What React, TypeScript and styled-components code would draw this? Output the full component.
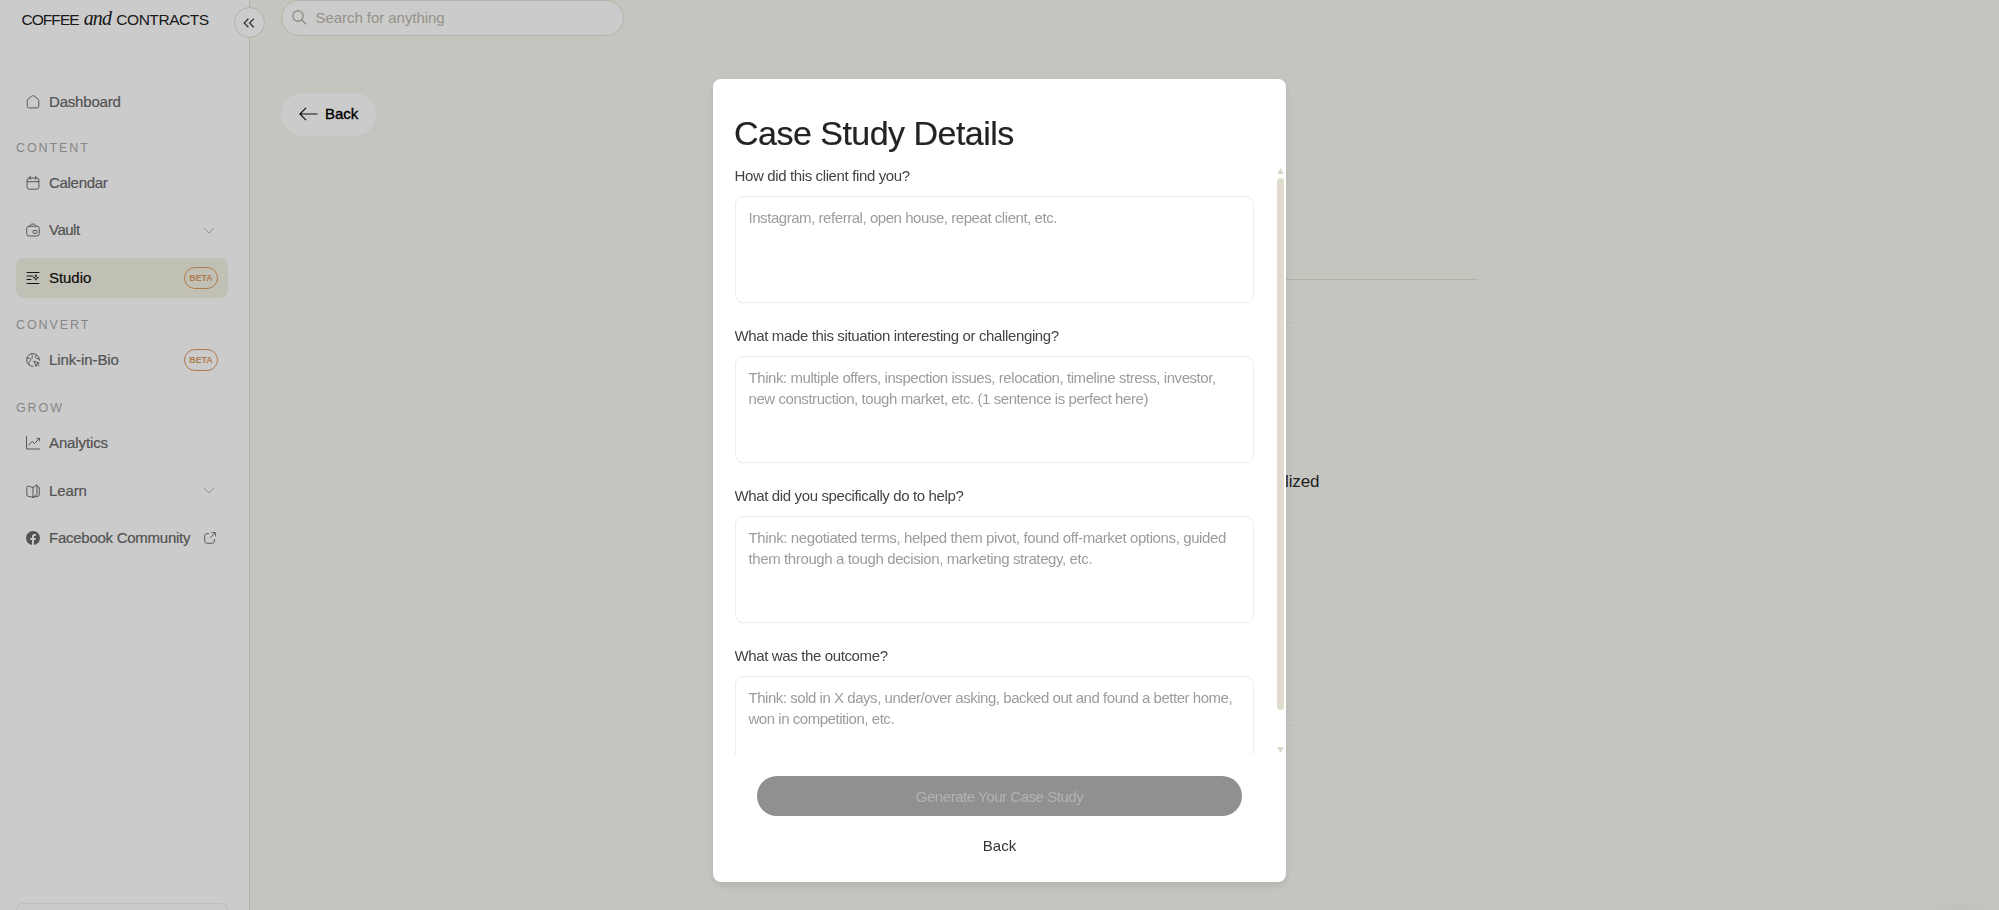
import React from 'react'
import styled, { createGlobalStyle, css } from 'styled-components'

type NavEntry = {
  label: string
  icon: React.ReactNode
  spacing: number
  active?: boolean
  beta?: boolean
  expandable?: boolean
  external?: boolean
}

type NavGroup = {
  title?: string
  offset: number
  items: NavEntry[]
}

const HomeIcon = () => (
  <Glyph viewBox="0 0 14 14">
    <path d="M1.2 5.6c0-.6.3-1.1.7-1.5L5.8 1.1c.7-.5 1.7-.5 2.4 0l3.900 3c.4.4.7.9.7 1.500v5.700c0 .9-.7 1.600-1.600 1.600H2.800c-.9 0-1.600-.7-1.600-1.600z" />
  </Glyph>
)

const CalendarIcon = () => (
  <Glyph viewBox="0 0 14 14">
    <rect x="1.1" y="2" width="11.8" height="11.2" rx="2" />
    <path d="M1.1 5.700h11.800M4.200.4v3M9.800.4v3" />
  </Glyph>
)

const VaultIcon = () => (
  <Glyph viewBox="0 0 14 14">
    <rect x=".7" y="3.2" width="12.6" height="9.8" rx="2.4" />
    <path d="M4.200 3.200c0-1.300.7-2.100 1.800-2.100h2c1.100 0 1.800.8 1.800 2.100" />
    <rect x="7" y="7.5" width="4.2" height="2.8" rx=".8" />
  </Glyph>
)

const StudioIcon = () => (
  <Glyph viewBox="0 0 14 14">
    <path d="M1 1.500h12M1 5h6M1 8.500h4M1 12.500h12" />
    <path d="M9.900 4.200c.3 1.700.8 2.200 2.500 2.500-1.700.3-2.200.8-2.500 2.500-.3-1.700-.8-2.200-2.500-2.500 1.700-.3 2.200-.8 2.500-2.500z" />
  </Glyph>
)

const LinkIcon = () => (
  <Glyph viewBox="0 0 14 14">
    <path d="M13.400 7.200A6.400 6.400 0 1 0 7 13.400" />
    <path d="M1 5.100l2.600.3c.8.1 1.200.7 1 1.400l-.4 1.100c-.2.7-1.300.8-1.300 1.600v2.100M5.200.9c.8.8 1.500 1.500 1.200 2.400-.3 1-.8 1.200-.3 2.200M10.600 1.900c-.9.8-1.700 1.500-1.400 2.500.3.9 1.700.7 2.300 1.400l1.700.2" />
    <path d="M8.200 8.200l5 1.800-2.100.9-.9 2.200zM11.200 11l2 2" />
  </Glyph>
)

const AnalyticsIcon = () => (
  <Glyph viewBox="0 0 14 14">
    <path d="M.5.500v12.500h13.300M2.500 9.200l3.200-3.400c.3-.3.7-.3 1 0l1.300 1.300c.3.3.7.3 1 0l4-4.200M10.800 2.300h2.600v2.600" />
  </Glyph>
)

const LearnIcon = () => (
  <Glyph viewBox="0 0 14 14">
    <path d="M7 3.500v9.800M7 13.300l-5.200-1.200c-.6-.1-1-.6-1-1.200V3.500c0-.9.7-1.500 1.500-1.300L7 3.500l4-2.800v10L7 13.300M11 3l1.200-.3c.6-.1 1.100.3 1.100.9v7.500c0 .5-.4.9-.9 1L7 13.300" />
  </Glyph>
)

const FacebookIcon = () => (
  <Glyph viewBox="0 0 14 14">
    <circle cx="7" cy="7" r="7" fill="currentColor" stroke="none" />
    <path
      d="M6 14V8.900H4.300V7H6V5.700c0-1.800 1-2.800 2.600-2.800.6 0 1.200.1 1.300.1v1.700H9c-.8 0-1.100.5-1.100 1.100V7h1.900l-.3 1.900H7.900V14z"
      fill="#fefefe"
      stroke="none"
    />
  </Glyph>
)

const groups: NavGroup[] = [
  {
    offset: 0,
    items: [{ label: 'Dashboard', icon: <HomeIcon />, spacing: -0.19 }],
  },
  {
    title: 'CONTENT',
    offset: 17,
    items: [
      { label: 'Calendar', icon: <CalendarIcon />, spacing: -0.3 },
      { label: 'Vault', icon: <VaultIcon />, spacing: -0.5, expandable: true },
      { label: 'Studio', icon: <StudioIcon />, spacing: -0.05, active: true, beta: true },
    ],
  },
  {
    title: 'CONVERT',
    offset: 19,
    items: [{ label: 'Link-in-Bio', icon: <LinkIcon />, spacing: -0.1, beta: true }],
  },
  {
    title: 'GROW',
    offset: 19.5,
    items: [
      { label: 'Analytics', icon: <AnalyticsIcon />, spacing: -0.12 },
      { label: 'Learn', icon: <LearnIcon />, spacing: -0.12, expandable: true },
      { label: 'Facebook Community', icon: <FacebookIcon />, spacing: -0.26, external: true },
    ],
  },
]

const questions = [
  {
    label: 'How did this client find you?',
    hint: 'Instagram, referral, open house, repeat client, etc.',
    spacing: -0.45,
  },
  {
    label: 'What made this situation interesting or challenging?',
    hint: 'Think: multiple offers, inspection issues, relocation, timeline stress, investor, new construction, tough market, etc. (1 sentence is perfect here)',
    spacing: -0.435,
  },
  {
    label: 'What did you specifically do to help?',
    hint: 'Think: negotiated terms, helped them pivot, found off-market options, guided them through a tough decision, marketing strategy, etc.',
    spacing: -0.385,
  },
  {
    label: 'What was the outcome?',
    hint: 'Think: sold in X days, under/over asking, backed out and found a better home, won in competition, etc.',
    spacing: -0.465,
  },
]

const NavItem = ({ item }: { item: NavEntry }) => (
  <NavRow $active={item.active}>
    {item.icon}
    <NavLabel $spacing={item.spacing}>{item.label}</NavLabel>
    {item.beta && <Beta>BETA</Beta>}
    {item.expandable && (
      <Chevron viewBox="0 0 12 7">
        <path d="M.8.800L6 6 11.200.800" />
      </Chevron>
    )}
    {item.external && (
      <External viewBox="0 0 12 12">
        <path d="M5 1.600H3C1.700 1.600.7 2.500.7 3.800V9c0 1.300 1 2.300 2.300 2.300h5.200c1.300 0 2.200-1 2.200-2.300V7M7.600.600h3.800v3.800M11.200.800L6.200 5.800" />
      </External>
    )}
  </NavRow>
)

const Sidebar = () => (
  <Side>
    <Logo>
      <LogoWord $spacing={-0.95}>COFFEE</LogoWord>
      <LogoAnd>and</LogoAnd>
      <LogoWord $spacing={-0.45}>CONTRACTS</LogoWord>
    </Logo>
    <Nav>
      {groups.map((group, i) => (
        <Group key={i} $offset={group.offset}>
          {group.title && <GroupTitle>{group.title}</GroupTitle>}
          {group.items.map(item => (
            <NavItem key={item.label} item={item} />
          ))}
        </Group>
      ))}
    </Nav>
    <AccountCard />
    <Collapse aria-label="Collapse sidebar">
      <svg width="12" height="10" viewBox="0 0 12 10">
        <path d="M5.400.700L1.200 5l4.200 4.300M10.800.700L6.600 5l4.200 4.300" />
      </svg>
    </Collapse>
  </Side>
)

const CaseStudyModal = () => (
  <Modal role="dialog">
    <Title>Case Study Details</Title>
    <ScrollRow>
      <Fields>
        {questions.map(q => (
          <Field key={q.label}>
            <Question>{q.label}</Question>
            <Answer placeholder={q.hint} $spacing={q.spacing} />
          </Field>
        ))}
      </Fields>
      <ScrollTrack>
        <ScrollArrow viewBox="0 0 7 6">
          <path d="M3.500 0L7 6H0z" />
        </ScrollArrow>
        <ScrollThumb />
        <ScrollArrow viewBox="0 0 7 6">
          <path d="M0 0h7L3.500 6z" />
        </ScrollArrow>
      </ScrollTrack>
    </ScrollRow>
    <Actions>
      <Generate disabled>Generate Your Case Study</Generate>
      <TextButton>Back</TextButton>
    </Actions>
  </Modal>
)

const App = () => (
  <>
    <GlobalStyle />
    <Page>
      <Sidebar />
      <Main>
        <SearchBox>
          <svg width="15" height="15" viewBox="0 0 15 15">
            <circle cx="6" cy="6" r="5.2" />
            <path d="M9.900 9.900l4.300 4.300" />
          </svg>
          <SearchInput placeholder="Search for anything" />
        </SearchBox>
        <BackButton>
          <svg width="19" height="14" viewBox="0 0 19 14">
            <path d="M18.500 7H1M7 .800L.9 7 7 13.200" />
          </svg>
          Back
        </BackButton>
        <Content>
          <Divider />
          <EmptyCard>personalized</EmptyCard>
        </Content>
      </Main>
      <ChatBubble />
    </Page>
    <Overlay>
      <CaseStudyModal />
    </Overlay>
  </>
)

const GlobalStyle = createGlobalStyle`
  * {
    box-sizing: border-box;
  }

  body {
    margin: 0;
    overflow: hidden;
    font-family: "Liberation Sans", Arial, sans-serif;
    font-size: 15px;
  }

  button, input, textarea {
    font: inherit;
    color: inherit;
    border: 0;
    padding: 0;
    background: none;
    outline: none;
  }
`

const medium = css`
  -webkit-text-stroke: 0.2px currentColor;
`

const Page = styled.div`
  display: flex;
  height: 100vh;
  background: #f7f7f1;
`

const Side = styled.aside`
  position: relative;
  display: flex;
  flex-direction: column;
  flex: none;
  width: 250px;
  padding-left: 16px;
  padding-right: 21px;
  background: #fefefe;
  border-right: 1px solid #dfdfd6;
`

const Logo = styled.div`
  display: flex;
  align-items: baseline;
  height: 40px;
  padding: 8px 0 0 5.5px;
  color: #222;
  line-height: 21px;
`

const LogoWord = styled.span<{ $spacing: number }>`
  font-size: 15.5px;
  letter-spacing: ${p => p.$spacing}px;
`

const LogoAnd = styled.em`
  margin: 0 5px;
  font-family: "Liberation Serif", serif;
  font-size: 20px;
  letter-spacing: -0.8px;
`

const Collapse = styled.button`
  position: absolute;
  top: 7px;
  right: -15.5px;
  display: flex;
  align-items: center;
  justify-content: center;
  width: 31px;
  height: 31px;
  border: 1px solid #dfdfd2;
  border-radius: 50%;
  background: #fefefe;

  svg {
    fill: none;
    stroke: #444;
    stroke-width: 1.3;
  }
`

const Nav = styled.nav`
  padding-top: 42px;
`

const Group = styled.div<{ $offset: number }>`
  display: flex;
  flex-direction: column;
  gap: 7px;
  margin-top: ${p => p.$offset}px;
`

const GroupTitle = styled.div`
  height: 16px;
  font-size: 12.5px;
  line-height: 17px;
  letter-spacing: 1.9px;
  color: #a8a8a8;
`

const NavRow = styled.a<{ $active?: boolean }>`
  display: flex;
  align-items: center;
  height: 40.5px;
  padding: 0 10px;
  border-radius: 8px;
  color: ${p => (p.$active ? '#111' : '#686868')};
  background: ${p => (p.$active ? '#f1f1e2' : 'transparent')};
`

const Glyph = styled.svg`
  flex: none;
  width: 14px;
  height: 14px;
  margin-right: 9px;
  fill: none;
  stroke: currentColor;
  stroke-width: 0.95;
  stroke-linecap: round;
  stroke-linejoin: round;
`

const NavLabel = styled.span<{ $spacing: number }>`
  flex: 1;
  line-height: 20px;
  white-space: nowrap;
  letter-spacing: ${p => p.$spacing}px;
  ${medium}
`

const Beta = styled.span`
  width: 34px;
  height: 22px;
  border: 1.5px solid #dc9c62;
  border-radius: 11px;
  color: #dc9c62;
  font-size: 8.8px;
  font-weight: 700;
  line-height: 20px;
  text-align: center;
`

const Chevron = styled.svg`
  width: 12px;
  height: 7px;
  margin-right: 3px;
  fill: none;
  stroke: #b9b9a6;
`

const External = styled.svg`
  width: 12px;
  height: 12px;
  margin-right: 2px;
  fill: none;
  stroke: #777;
`

const AccountCard = styled.div`
  height: 7px;
  margin-top: auto;
  border: 1.5px solid #efefe9;
  border-bottom: 0;
  border-radius: 6px 6px 0 0;
`

const Main = styled.main`
  display: flex;
  flex-direction: column;
  align-items: flex-start;
  flex: 1;
  padding-left: 30.5px;
`

const SearchBox = styled.label`
  display: flex;
  align-items: center;
  gap: 8.5px;
  width: 343.5px;
  height: 35.5px;
  padding-left: 10.5px;
  border: 1px solid #dfdfd2;
  border-radius: 18px;
  background: #fefefe;

  svg {
    fill: none;
    stroke: #b3b3a3;
    stroke-width: 1.4;
  }
`

const SearchInput = styled.input`
  width: 270px;
  letter-spacing: -0.05px;

  &::placeholder {
    color: #bab8a8;
  }
`

const BackButton = styled.button`
  display: flex;
  align-items: center;
  gap: 7px;
  width: 95.5px;
  height: 43.5px;
  margin-top: 57px;
  padding: 0 0 1px 18.5px;
  border-radius: 22px;
  background: #fefefe;
  color: #000;
  -webkit-text-stroke: 0.35px currentColor;

  svg {
    fill: none;
    stroke: #111;
    stroke-width: 1.2;
  }
`

const Content = styled.section`
  display: flex;
  flex-direction: column;
  align-self: center;
  gap: 42px;
  width: 707px;
  margin-top: 143px;
  margin-right: 30px;
`

const Divider = styled.hr`
  width: 100%;
  height: 1px;
  margin: 0;
  border: 0;
  background: #dedecf;
`

const EmptyCard = styled.div`
  display: flex;
  align-items: center;
  justify-content: flex-end;
  height: 404px;
  padding: 0 158px 85px 0;
  border: 1px solid #f0f0ea;
  border-radius: 8px;
  color: #2a2a2a;
  font-size: 17px;
  letter-spacing: -0.15px;
`

const ChatBubble = styled.div`
  position: fixed;
  top: 915px;
  right: 14px;
  width: 50px;
  height: 50px;
  border-radius: 50%;
  box-shadow: 0 0 30px rgba(0, 0, 0, 0.12);
`

const Overlay = styled.div`
  position: fixed;
  inset: 0;
  display: flex;
  justify-content: center;
  align-items: flex-start;
  padding-top: 79px;
  background: rgba(0, 0, 0, 0.2);
`

const Modal = styled.div`
  display: flex;
  flex-direction: column;
  width: 573px;
  height: 803px;
  padding-top: 32px;
  border-radius: 8px;
  background: #fff;
  box-shadow: 0 4px 10px rgba(0, 0, 0, 0.1);
`

const Title = styled.h1`
  height: 56px;
  margin: 0;
  padding-left: 21px;
  color: #232323;
  font-size: 34px;
  font-weight: 400;
  line-height: 44px;
  letter-spacing: -0.52px;
  ${medium}
`

const ScrollRow = styled.div`
  display: flex;
  justify-content: space-between;
  height: 587px;
  padding: 0 2.5px 0 21.5px;
`

const Fields = styled.div`
  width: 519px;
  height: 100%;
  overflow: hidden;
`

const Field = styled.label`
  display: block;
  height: 160px;
`

const Question = styled.span`
  display: block;
  height: 29px;
  line-height: 17px;
  letter-spacing: -0.37px;
  color: #444;
`

const Answer = styled.textarea<{ $spacing: number }>`
  display: block;
  width: 100%;
  height: 107px;
  padding: 10px 13px;
  border: 1.5px solid #ececec;
  border-radius: 8px;
  line-height: 21px;
  letter-spacing: ${p => p.$spacing}px;
  resize: none;
  overflow: hidden;

  &::placeholder {
    color: #9c9c9c;
  }
`

const ScrollTrack = styled.div`
  display: flex;
  flex-direction: column;
  width: 7px;
  height: 586px;
  padding-top: 1px;

  & > :last-child {
    margin-top: auto;
  }
`

const ScrollArrow = styled.svg`
  flex: none;
  width: 7px;
  height: 6px;
  fill: #d9d9c8;
`

const ScrollThumb = styled.div`
  width: 7px;
  height: 532px;
  margin-top: 3.5px;
  border-radius: 4px;
  background: #dfdccd;
`

const Actions = styled.div`
  display: flex;
  flex-direction: column;
  align-items: center;
  gap: 18px;
  padding-top: 22px;
`

const Generate = styled.button`
  width: 485px;
  height: 40px;
  border-radius: 20px;
  background: #909090;
  color: #b3b3b3;
  letter-spacing: -0.46px;
`

const TextButton = styled.button`
  height: 22px;
  color: #333;
`

export default App
